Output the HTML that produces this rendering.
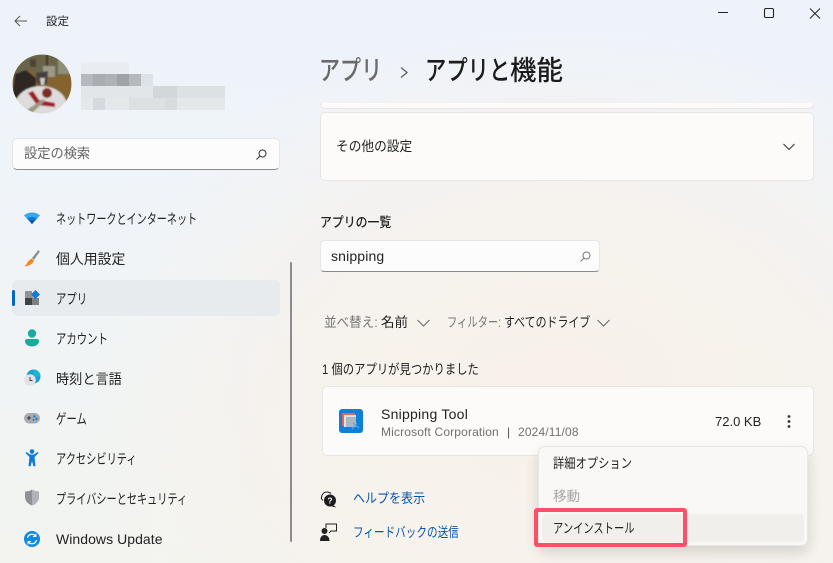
<!DOCTYPE html>
<html lang="ja"><head><meta charset="utf-8"><title>設定</title>
<style>
html,body{margin:0;padding:0}
body{width:833px;height:563px;overflow:hidden;position:relative;font-family:"Liberation Sans","Noto Sans CJK JP",sans-serif;color:#1f1f1f;
background:radial-gradient(ellipse 480px 380px at 560px 400px,#f8f1ea 0%,rgba(248,241,234,.75) 50%,rgba(248,241,234,0) 100%),linear-gradient(180deg,#eef3fb 0%,#f0f4f7 50%,#f3f4f0 100%)}
.t{position:absolute;white-space:nowrap;line-height:20px;font-size:13.5px;transform-origin:left center}
.nav{left:56px;color:#222;font-size:14px}
.card{position:absolute;background:#fcfbfa;border:1px solid #e8e6e4;border-radius:5px;box-sizing:border-box}
.in{position:absolute;background:#fdfcfc;border:1px solid #e6e5e5;border-bottom:1px solid #8a8a8a;border-radius:4px;box-sizing:border-box}
svg{position:absolute;overflow:visible}
.p{position:absolute}
</style></head><body>

<svg style="left:14px;top:15px" width="13" height="12" viewBox="0 0 13 12" fill="none" stroke="#555" stroke-width="1"><path d="M1 6H13M6 1L1 6L6 11"/></svg>
<div class="t" style="left:46px;top:12px;font-size:11.5px;color:#222">設定</div>

<svg style="left:717px;top:8px" width="105" height="14" viewBox="0 0 105 14" fill="none" stroke="#222" stroke-width="1"><path d="M1 4.500H11"/><rect x="47.500" y=".5" width="9" height="9" rx="1.500" stroke-width="1.100"/><path d="M93 0.500L103 10.500M103 0.500L93 10.500"/></svg>

<!-- avatar -->
<svg style="left:12px;top:54px" width="60" height="60" viewBox="0 0 60 60">
<defs><clipPath id="c"><circle cx="30" cy="30" r="29.500"/></clipPath><filter id="b" x="-10%" y="-10%" width="120%" height="120%"><feGaussianBlur stdDeviation=".7"/></filter></defs>
<g clip-path="url(#c)"><g filter="url(#b)">
<rect width="60" height="60" fill="#7b6034"/>
<rect x="0" y="0" width="60" height="20" fill="#6b6548"/>
<rect x="46" y="0" width="14" height="20" fill="#8f9078"/>
<rect x="34" y="0" width="2" height="14" fill="#3f3220"/>
<rect x="31" y="12" width="12" height="11" fill="#9c9888"/>
<rect x="18" y="5" width="6" height="8" fill="#4d4238"/>
<path d="M0 26L18 16L30 26L60 20V46H0Z" fill="#84632f"/>
<path d="M0 42L3 20L14 16L24 24L24 34L6 44Z" fill="#2f2620"/>
<path d="M24 19L36 17L35 29L30 33L25 29Z" fill="#45403f"/>
<path d="M28 24L33 24L32 31L29 31Z" fill="#d2cbc8"/>
<ellipse cx="29" cy="52" rx="26" ry="20" fill="#dedbdb"/>
<circle cx="35" cy="39" r="5" fill="#7e2a1c"/>
<path d="M16 39L21 37L27 46L43 49L43 53L25 51Z" fill="#a01a22"/>
<path d="M15 56L31 45L33 47L19 60Z" fill="#9a9a80"/>
</g></g></svg>

<!-- pixelated name -->
<svg style="left:81px;top:62px" width="144" height="48" shape-rendering="crispEdges">
<g fill="#e9edf1"><rect width="48" height="12"/></g>
<g><rect y="12" width="12" height="12" fill="#b5b9bd"/><rect x="12" y="12" width="12" height="12" fill="#a9adb1"/><rect x="24" y="12" width="12" height="12" fill="#aeb2b6"/><rect x="36" y="12" width="12" height="12" fill="#9fa3a8"/><rect x="48" y="12" width="12" height="12" fill="#b5b9bd"/><rect x="60" y="12" width="12" height="12" fill="#dde2e6"/></g>
<g fill="#e2e6e9"><rect y="24" width="144" height="12"/></g>
<rect x="72" y="24" width="24" height="12" fill="#d2d7da"/><rect x="96" y="24" width="48" height="12" fill="#dce1e4"/>
<g fill="#e4e8eb"><rect y="36" width="144" height="12"/></g>
<rect x="12" y="36" width="12" height="12" fill="#d6dade"/><rect x="48" y="36" width="36" height="12" fill="#dce0e3"/><rect x="84" y="36" width="12" height="12" fill="#d8dcdf"/>
</svg>

<!-- search -->
<div class="in" style="left:12px;top:138px;width:268px;height:32px;border-radius:5px"></div>
<div class="t" style="left:24px;top:144px;color:#666;transform:scaleX(.98)">設定の検索</div>
<svg style="left:256px;top:149px" width="11" height="11" viewBox="0 0 11 11" fill="none" stroke="#333" stroke-width="1"><circle cx="6.500" cy="4.500" r="3.500"/><path d="M4 7L.5 10.500"/></svg>

<!-- nav selected -->
<div class="p" style="left:12px;top:280px;width:268px;height:36px;background:#e8ebee;border-radius:5px"></div>
<div class="p" style="left:12px;top:290px;width:3px;height:16px;background:#0067c0;border-radius:2px"></div>

<div class="t nav" style="top:209px;transform:scaleX(.72)">ネットワークとインターネット</div>
<div class="t nav" style="top:249px;transform:scaleX(.99)">個人用設定</div>
<div class="t nav" style="top:289px;transform:scaleX(.74)">アプリ</div>
<div class="t nav" style="top:329px;transform:scaleX(.74)">アカウント</div>
<div class="t nav" style="top:369px;transform:scaleX(.94)">時刻と言語</div>
<div class="t nav" style="top:409px;transform:scaleX(.74)">ゲーム</div>
<div class="t nav" style="top:449px;transform:scaleX(.73)">アクセシビリティ</div>
<div class="t nav" style="top:489px;transform:scaleX(.725)">プライバシーとセキュリティ</div>
<div class="t nav" style="top:529px;letter-spacing:.05px">Windows Update</div>

<!-- nav icons -->
<svg style="left:24px;top:212px" width="16" height="12" viewBox="0 0 16 12"><path d="M0 3.500C4 -.5 12 -.5 16 3.500L8 12Z" fill="#35a9ee"/><path d="M3 6.500C6 4.500 10 4.500 13 6.500L8 12Z" fill="#0f78d4"/><path d="M5.500 9C7 8 9 8 10.500 9L8 12Z" fill="#0a4f9e"/></svg>
<svg style="left:24px;top:250px" width="16" height="17" viewBox="0 0 16 17"><path d="M8 8L14 .5C15 0 16 1 15.500 2L10 10Z" fill="#8a8d92"/><path d="M7.500 8.500L10 10.500C9 14 5 16 .5 16.500C3 14.500 3.500 10.500 7.500 8.500Z" fill="#f08a24"/></svg>
<svg style="left:25px;top:290px" width="15" height="15" viewBox="0 0 15 15" shape-rendering="crispEdges"><rect x="0" y="1" width="7" height="7" fill="#8f9296"/><rect x="0" y="8" width="7" height="7" fill="#3f4144"/><rect x="7" y="8" width="7" height="7" fill="#7c7f83"/><rect x="7" y="3" width="4" height="5" fill="#a3a6aa"/><path d="M10.500 0L15 4.500L10.500 9L6 4.500Z" fill="#0f7ce0" shape-rendering="auto"/></svg>
<svg style="left:25px;top:329px" width="14" height="18" viewBox="0 0 14 18"><circle cx="7" cy="4.500" r="4.200" fill="#1bab9e"/><path d="M0 12C0 10.500 1 10 2 10H12C13 10 14 10.500 14 12C14 15.500 10.500 17.500 7 17.500C3.500 17.500 0 15.500 0 12Z" fill="#1bab9e"/></svg>
<svg style="left:24px;top:369px" width="17" height="18" viewBox="0 0 17 18"><circle cx="9.500" cy="7.500" r="7" fill="#1aa0d8"/><path d="M9.500 .5A7 7 0 0 1 16.500 7.500H9.500Z" fill="#1bb8c8"/><circle cx="6" cy="11" r="5.800" fill="#e2e2e2"/><path d="M6 8V11.500H8.500" stroke="#444" stroke-width="1" fill="none"/></svg>
<svg style="left:24px;top:412px" width="16" height="13" viewBox="0 0 16 13"><rect x="0" y="1" width="16" height="10.500" rx="5.200" fill="#a8abb0"/><path d="M3 6H7M5 4V8" stroke="#333" stroke-width="1"/><circle cx="10.500" cy="4.500" r="1.200" fill="#1a7fd8"/><circle cx="12.500" cy="7" r="1.200" fill="#1a7fd8"/><circle cx="9.500" cy="8" r="1" fill="#1a7fd8"/></svg>
<svg style="left:25px;top:449px" width="14" height="18" viewBox="0 0 14 18" fill="#0f7ad8"><circle cx="7" cy="2.500" r="2.300"/><path d="M.5 4L1.500 3L5 5.500H9L12.500 3L13.500 4L9.500 8L10.500 17L8.500 17.500L7 12L5.500 17.500L3.500 17L4.500 8Z"/></svg>
<svg style="left:25px;top:489px" width="14" height="17" viewBox="0 0 14 17"><path d="M7 .5C9 2 11.500 2.500 14 2.500V8C14 12 11 15 7 16.500C3 15 0 12 0 8V2.500C2.500 2.500 5 2 7 .5Z" fill="#8e9196"/><path d="M7 .5C9 2 11.500 2.500 14 2.500V8C14 12 11 15 7 16.500Z" fill="#b0b3b7"/></svg>
<svg style="left:24px;top:531px" width="16" height="16" viewBox="0 0 16 16"><circle cx="8" cy="8" r="8" fill="#0f88e0"/><path d="M3.500 7A4.500 4.500 0 0 1 11.500 5M12.500 9A4.500 4.500 0 0 1 4.500 11" fill="none" stroke="#fff" stroke-width="1.200"/><path d="M12 2.500V5.500H9M4 13.500V10.500H7" fill="none" stroke="#fff" stroke-width="1"/></svg>

<!-- scrollbar -->
<div class="p" style="left:290px;top:262px;width:2px;height:280px;background:#8b8b8b;border-radius:1px"></div>

<!-- header -->
<div class="t" style="left:319px;top:52px;font-size:27px;line-height:38px;color:#6a6a6a;font-weight:500;transform:scaleX(.78)">アプリ</div>
<svg style="left:400px;top:67px" width="8" height="11" viewBox="0 0 8 11" fill="none" stroke="#666" stroke-width="1.400"><path d="M1 .5L7 5.500L1 10.500"/></svg>
<div class="t" style="left:425px;top:52px;font-size:27px;line-height:38px;color:#1c1c1c;font-weight:500;transform:scaleX(.79)">アプリと</div>
<div class="t" style="left:510px;top:52px;font-size:27px;line-height:38px;color:#1c1c1c;font-weight:500;transform:scaleX(.98)">機能</div>

<!-- cards -->
<div class="p" style="left:320px;top:103px;width:494px;height:6px;background:#fcfbfa;border:1px solid #e8e6e4;border-top:0;border-radius:0 0 5px 5px;box-sizing:border-box"></div>
<div class="card" style="left:320px;top:112px;width:494px;height:69px"></div>
<div class="t" style="left:336px;top:137px;color:#222;transform:scaleX(.94)">その他の設定</div>
<svg style="left:783px;top:143px" width="12" height="8" viewBox="0 0 12 8" fill="none" stroke="#333" stroke-width="1"><path d="M.5 1L6 6.500L11.500 1"/></svg>

<div class="t" style="left:320px;top:213px;color:#222;font-weight:500;transform:scaleX(.88)">アプリの一覧</div>
<div class="in" style="left:320px;top:240px;width:280px;height:32px"></div>
<div class="t" style="left:331px;top:246px;font-size:14px;color:#222;letter-spacing:.15px">snipping</div>
<svg style="left:580px;top:251px" width="11" height="11" viewBox="0 0 11 11" fill="none" stroke="#777" stroke-width="1"><circle cx="6.500" cy="4.500" r="3.500"/><path d="M4 7L.5 10.500"/></svg>

<div class="t" style="left:324px;top:313px;color:#777;transform:scaleX(.93)">並べ替え:</div>
<div class="t" style="left:381px;top:313px;color:#222">名前</div>
<svg style="left:417px;top:319px" width="13" height="8" viewBox="0 0 13 8" fill="none" stroke="#666" stroke-width="1"><path d="M.5 1L6.500 7L12.500 1"/></svg>
<div class="t" style="left:447px;top:313px;color:#777;transform:scaleX(.76)">フィルター:</div>
<div class="t" style="left:504px;top:313px;color:#222;transform:scaleX(.81)">すべてのドライブ</div>
<svg style="left:597px;top:319px" width="13" height="8" viewBox="0 0 13 8" fill="none" stroke="#666" stroke-width="1"><path d="M.5 1L6.500 7L12.500 1"/></svg>

<div class="t" style="left:322px;top:360px;color:#222;transform:scaleX(.84)">1 個のアプリが見つかりました</div>

<div class="card" style="left:322px;top:386px;width:492px;height:70px"></div>
<svg style="left:339px;top:409px" width="24" height="24" viewBox="0 0 24 24"><rect width="24" height="24" rx="3" fill="#0f80d8"/><rect x="3" y="4" width="13" height="13" fill="#e8664c"/><rect x="5" y="6" width="12" height="12" fill="#dfe3e6"/><rect x="7" y="8" width="10" height="10" fill="#aab6c0"/><path d="M18 14L13 20M14 14L20 19" stroke="#5aa7e6" stroke-width="1" fill="none"/></svg>
<div class="t" style="left:381px;top:404px;font-size:14px;color:#222;letter-spacing:.25px">Snipping Tool</div>
<div class="t" style="left:381px;top:422px;font-size:12px;color:#707070;letter-spacing:.15px">Microsoft Corporation</div>
<div class="t" style="left:507px;top:422px;font-size:12px;color:#555">|</div>
<div class="t" style="left:518px;top:422px;font-size:12px;color:#707070;letter-spacing:.15px">2024/11/08</div>
<div class="t" style="left:715px;top:412px;font-size:13px;color:#222">72.0 KB</div>
<svg style="left:787px;top:415px" width="4" height="13" viewBox="0 0 4 13" fill="#333"><circle cx="2" cy="1.500" r="1.400"/><circle cx="2" cy="6.500" r="1.400"/><circle cx="2" cy="11.500" r="1.400"/></svg>

<!-- help -->
<svg style="left:320px;top:491px" width="17" height="17" viewBox="0 0 17 17"><path d="M1.500 8C1 3.500 4 1 7 1C8.500 1 10 1.500 11 2.500" fill="none" stroke="#222" stroke-width="1.100"/><path d="M1.500 8L3 9.500" stroke="#222" stroke-width="1"/><circle cx="10" cy="9.500" r="6" fill="#1c1c1c"/><path d="M13 14L16.500 16.500L12 15.500Z" fill="#1c1c1c"/><text x="10" y="12.500" font-size="8.500" font-weight="700" text-anchor="middle" fill="#fff" font-family="Liberation Sans">?</text></svg>
<div class="t" style="left:353px;top:489px;color:#0a57a8;transform:scaleX(.89)">ヘルプを表示</div>
<svg style="left:320px;top:523px" width="17" height="18" viewBox="0 0 17 18"><circle cx="4.500" cy="8" r="3" fill="#222"/><path d="M0 18C0 14 2 12 4.500 12C7 12 9.500 14 9.500 18Z" fill="#222"/><path d="M6 5V1H16.500V8H11L9 10" fill="none" stroke="#222" stroke-width="1"/></svg>
<div class="t" style="left:353px;top:523px;color:#0a57a8;transform:scaleX(.785)">フィードバックの送信</div>

<!-- menu -->
<div class="p" style="left:538px;top:446px;width:270px;height:100px;background:#faf8f6;border:1px solid #e9e7e5;border-radius:7px;box-sizing:border-box;box-shadow:0 6px 14px rgba(0,0,0,.14)"></div>
<div class="p" style="left:542px;top:514px;width:262px;height:28px;background:#f1efec;border-radius:4px"></div>
<div class="t" style="left:553px;top:454px;color:#222;transform:scaleX(.836)">詳細オプション</div>
<div class="t" style="left:553px;top:487px;color:#a5a5a5">移動</div>
<div class="t" style="left:553px;top:519px;color:#222;transform:scaleX(.76)">アンインストール</div>
<div class="p" style="left:534px;top:508px;width:153px;height:39px;border:4px solid #fd5068;border-radius:3px;box-sizing:border-box"></div>

</body></html>
